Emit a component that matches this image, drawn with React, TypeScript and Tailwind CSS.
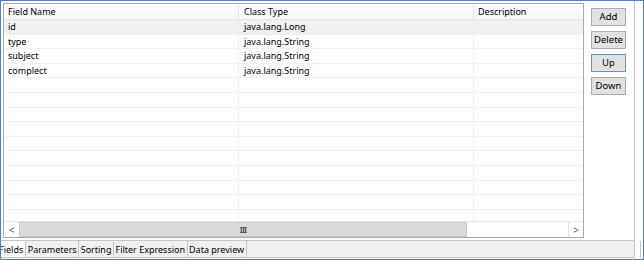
import React from 'react'

interface FieldRow {
  name: string
  type: string
  description: string
}

const rows: FieldRow[] = [
  { name: 'id', type: 'java.lang.Long', description: '' },
  { name: 'type', type: 'java.lang.String', description: '' },
  { name: 'subject', type: 'java.lang.String', description: '' },
  { name: 'complect', type: 'java.lang.String', description: '' },
]

const EMPTY_ROWS = 10

const tabs = ['Fields', 'Parameters', 'Sorting', 'Filter Expression', 'Data preview']

const SideButton: React.FC<{ label: string; focused?: boolean }> = ({ label, focused }) => (
  <button
    className={
      'w-[35px] h-[18px] flex items-center justify-center text-[9.5px] leading-none text-black bg-[#e1e1e1] border ' +
      (focused ? 'border-[#5b9bd5]' : 'border-[#adadad]')
    }
  >
    {label}
  </button>
)

export default function App() {
  return (
    <div
      className="w-[644px] h-[260px] bg-white border border-[#4f7fbf] overflow-hidden flex flex-col"
      style={{ fontFamily: '"Noto Sans", "Open Sans", Arial, sans-serif' }}
    >
      <div className="flex">
        {/* main panel */}
        <div className="w-[634px] h-[240px] border-r border-b border-[#c6c6c6] flex pl-[2px] pt-[2px]">
          {/* table */}
          <div className="w-[581px] h-[235px] border border-[#a9a9a9] flex flex-col">
            <div className="flex h-[16px] bg-gradient-to-b from-white to-[#f6f6f6] border-b border-[#e5e5e5] text-[9px] text-black leading-none">
              <div className="w-[235px] pl-[4px] flex items-center border-r border-[#e5e5e5]">Field Name</div>
              <div className="w-[235px] pl-[5px] flex items-center border-r border-[#e5e5e5]">Class Type</div>
              <div className="flex-1 pl-[4px] flex items-center">Description</div>
            </div>
            <div className="flex-1 overflow-hidden">
              {rows.map((r, i) => (
                <div
                  key={r.name}
                  className={
                    'flex h-[14.6px] border-b border-[#f0f0f0] text-[9px] leading-none text-black ' +
                    (i === 0 ? 'bg-[#f0f0f0]' : '')
                  }
                >
                  <div className="w-[235px] pl-[4px] flex items-center border-r border-[#f0f0f0]">{r.name}</div>
                  <div className="w-[235px] pl-[5px] flex items-center border-r border-[#f0f0f0]">{r.type}</div>
                  <div className="flex-1 pl-[4px] flex items-center">{r.description}</div>
                </div>
              ))}
              {Array.from({ length: EMPTY_ROWS }).map((_, i) => (
                <div key={i} className="flex h-[14.6px] border-b border-[#f0f0f0]">
                  <div className="w-[235px] border-r border-[#f0f0f0]" />
                  <div className="w-[235px] border-r border-[#f0f0f0]" />
                  <div className="flex-1" />
                </div>
              ))}
            </div>
            {/* horizontal scrollbar */}
            <div className="h-[16px] flex border-t border-[#e8e8e8] bg-white">
              <div className="w-[15px] flex items-center justify-center text-[10px] text-[#606060] leading-none">&lt;</div>
              <div className="w-[448px] bg-[#dadada] border border-[#c8c8c8] flex items-center justify-center">
                <span className="text-[8px] leading-none text-[#555] font-bold tracking-[-1px]">III</span>
              </div>
              <div className="flex-1 bg-white" />
              <div className="w-[15px] flex items-center justify-center text-[10px] text-[#606060] leading-none border-l border-[#e0e0e0]">&gt;</div>
            </div>
          </div>
          {/* buttons */}
          <div className="ml-[7px] mt-[5px] flex flex-col gap-[5px]">
            <SideButton label="Add" />
            <SideButton label="Delete" />
            <SideButton label="Up" focused />
            <SideButton label="Down" />
          </div>
        </div>
        <div className="flex-1" />
      </div>
      {/* tab bar */}
      <div className="flex h-[17px]">
        <div className="w-[634px] flex bg-[#f0f0f0] border-b border-r border-[#c6c6c6] text-[9px] leading-none text-black">
          {tabs.map((t, i) => (
            <div
              key={t}
              className={
                'h-full flex items-center border-r border-[#c6c6c6] ' +
                (i === 0 ? 'bg-white pr-[2px] -ml-[2px]' : 'px-[1.5px]')
              }
            >
              {t}
            </div>
          ))}
        </div>
        <div className="w-[5px]" />
        <div className="flex-1 border-l border-[#c6c6c6]" />
      </div>
    </div>
  )
}
